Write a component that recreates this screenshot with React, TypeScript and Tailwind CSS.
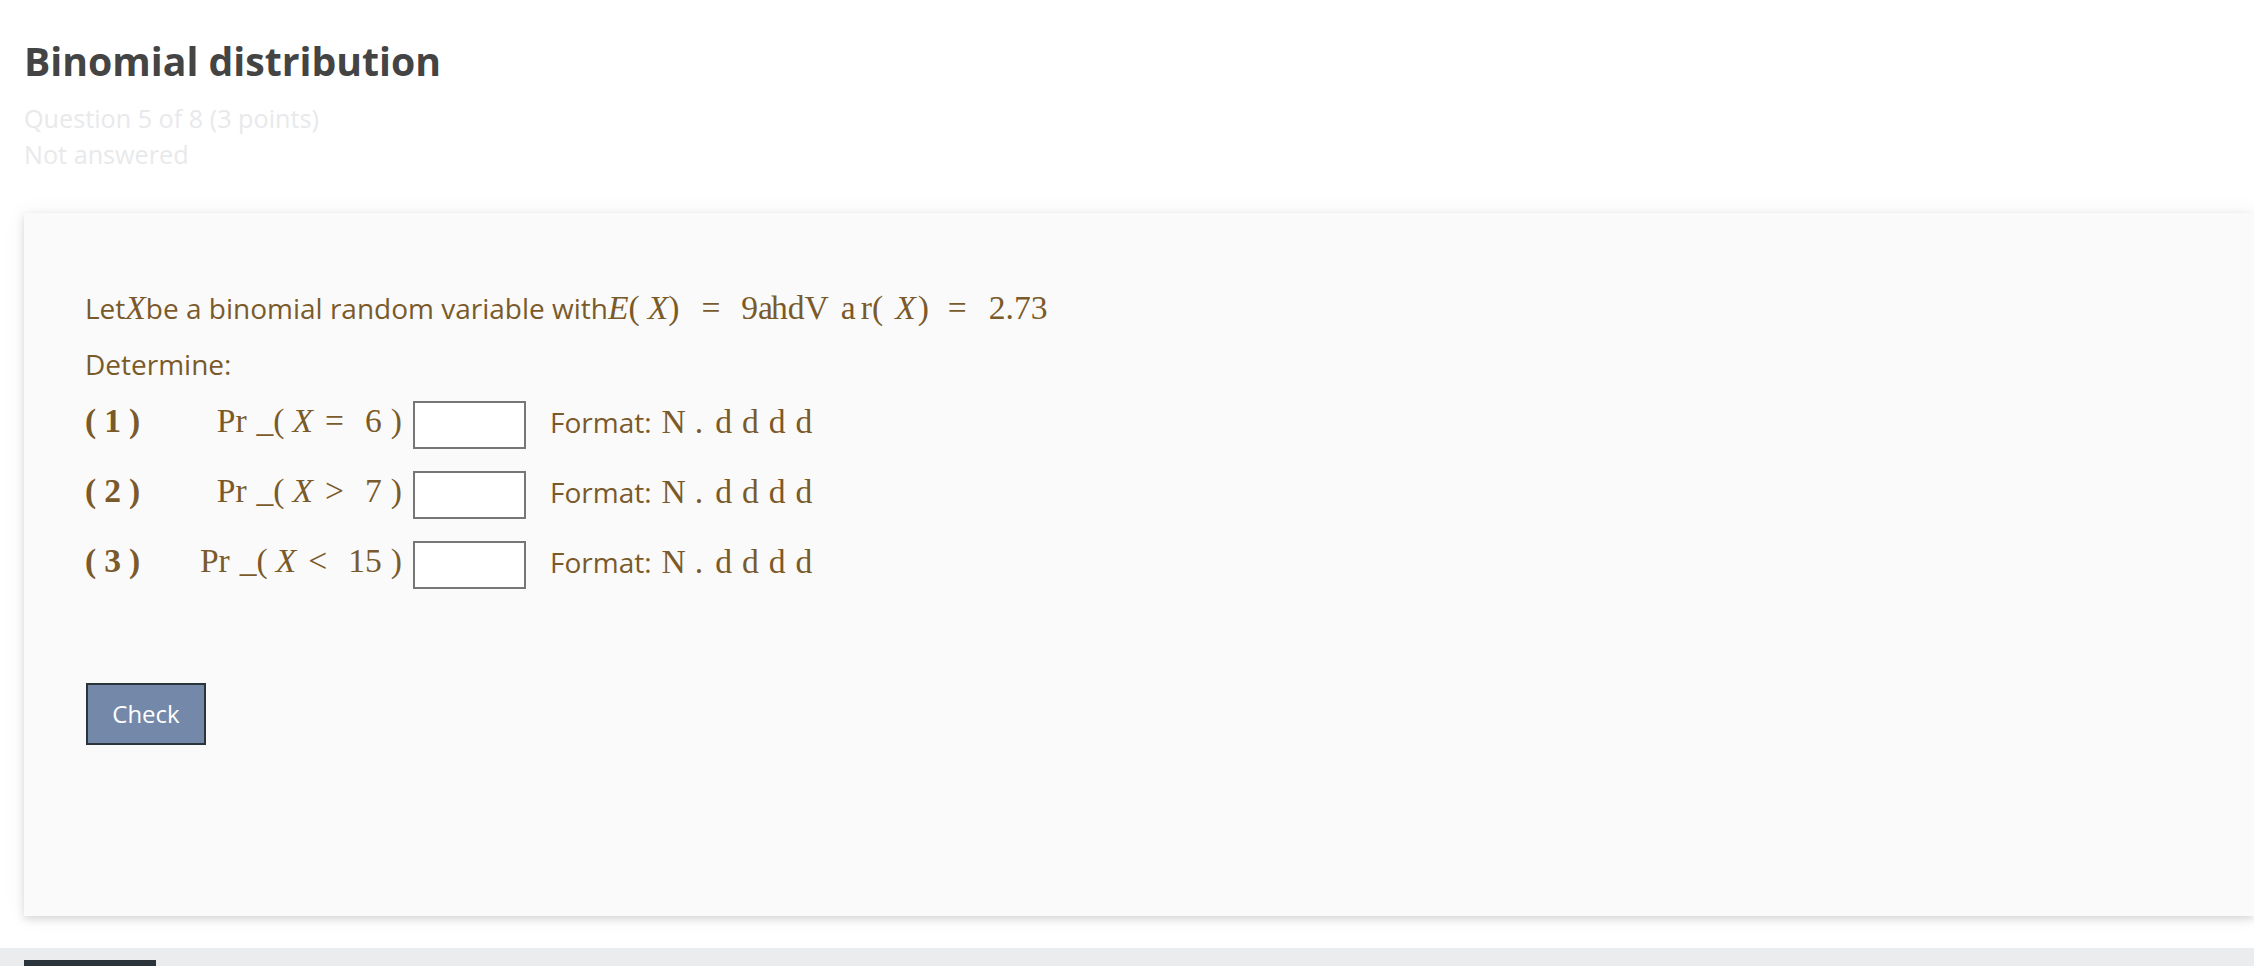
import React from "react";

const brown = "text-[#7a5a2b]";

function Pr({ n, rel, val }: { n: number; rel: string; val: string }) {
  return (
    <div className="flex h-[48px] items-center">
      <span className="mb-[8px] flex w-[120px] font-['Liberation_Serif',serif] text-[33.6px] font-bold leading-none">
        <span>(</span>
        <span className="ml-[8px]">{n}</span>
        <span className="ml-[8px]">)</span>
      </span>
      <span className="mb-[8px] flex w-[197px] justify-end font-['Liberation_Serif',serif] text-[33.6px] leading-none">
        <span>Pr</span>
        <span className="ml-[10px]">_(</span>
        <span className="ml-[8px] italic">X</span>
        <span className="ml-[12px]">{rel}</span>
        <span className="ml-[21px]">{val}</span>
        <span className="ml-[9px]">)</span>
      </span>
      <input
        type="text"
        className="ml-[11px] h-[48px] w-[113px] border-2 border-[#777777] bg-white outline-none"
      />
      <span className="ml-[24px] mb-[6px] text-[28px] leading-none">Format:</span>
      <span className="ml-[10px] mb-[6px] flex font-['Liberation_Serif',serif] text-[33.6px] leading-none">
        <span>N</span>
        <span className="ml-[9px]">.</span>
        <span className="ml-[12px] tracking-[10px]">dddd</span>
      </span>
    </div>
  );
}

export default function App() {
  return (
    <div className="flex min-h-screen flex-col overflow-hidden bg-white font-['Open_Sans',sans-serif]">
      <div className="pl-6 pt-[38px]">
        <h1 className="text-[39.2px] font-bold leading-[46px] text-[#444444]">
          Binomial distribution
        </h1>
        <div className="mt-[16px] text-[25.2px] leading-[36px] text-[#e8e9eb]">
          <div>Question 5 of 8 (3 points)</div>
          <div>Not answered</div>
        </div>
      </div>

      <div
        className={`ml-6 mt-[41px] h-[703px] bg-[#fafafa] pl-[61px] pt-[75px] shadow-[0_3px_8px_rgba(0,0,0,0.14),0_0_24px_rgba(0,0,0,0.05)] ${brown}`}
      >
        <div className="flex h-[40px] items-baseline whitespace-pre text-[28px] leading-[40px]">
          <span>Let</span>
          <span className="font-['Liberation_Serif',serif] text-[33.6px] italic">X</span>
          <span>be a binomial random variable with</span>
          <span className="font-['Liberation_Serif',serif] text-[33.6px]">
            <span className="italic">E</span>
            <span>(</span>
            <span className="ml-[8px] italic">X</span>
            <span>)</span>
            <span className="ml-[22px]">=</span>
            <span className="ml-[21px]">9a</span>
            <span className="-ml-[2px]">hd</span>
            <span>V</span>
            <span className="ml-[12px]">a</span>
            <span className="ml-[5px]">r(</span>
            <span className="ml-[12px] italic">X</span>
            <span className="ml-[2px]">)</span>
            <span className="ml-[19px]">=</span>
            <span className="ml-[22px]">2.73</span>
          </span>
        </div>
        <div className="mt-[16px] h-[40px] text-[28px] leading-[40px]">Determine:</div>

        <div className="mt-[17px] flex flex-col gap-[22px]">
          <Pr n={1} rel="=" val="6" />
          <Pr n={2} rel=">" val="7" />
          <Pr n={3} rel="<" val="15" />
        </div>

        <button className="ml-px mt-[94px] h-[62px] w-[120px] border-2 border-[#2b343b] bg-[#7489a9] text-[24px] text-white">
          Check
        </button>
      </div>

      <div className="mt-[32px] flex-1 bg-[#ebecee] pl-6 pt-3">
        <div className="h-[40px] w-[132px] bg-[#2c343b]" />
      </div>
    </div>
  );
}
